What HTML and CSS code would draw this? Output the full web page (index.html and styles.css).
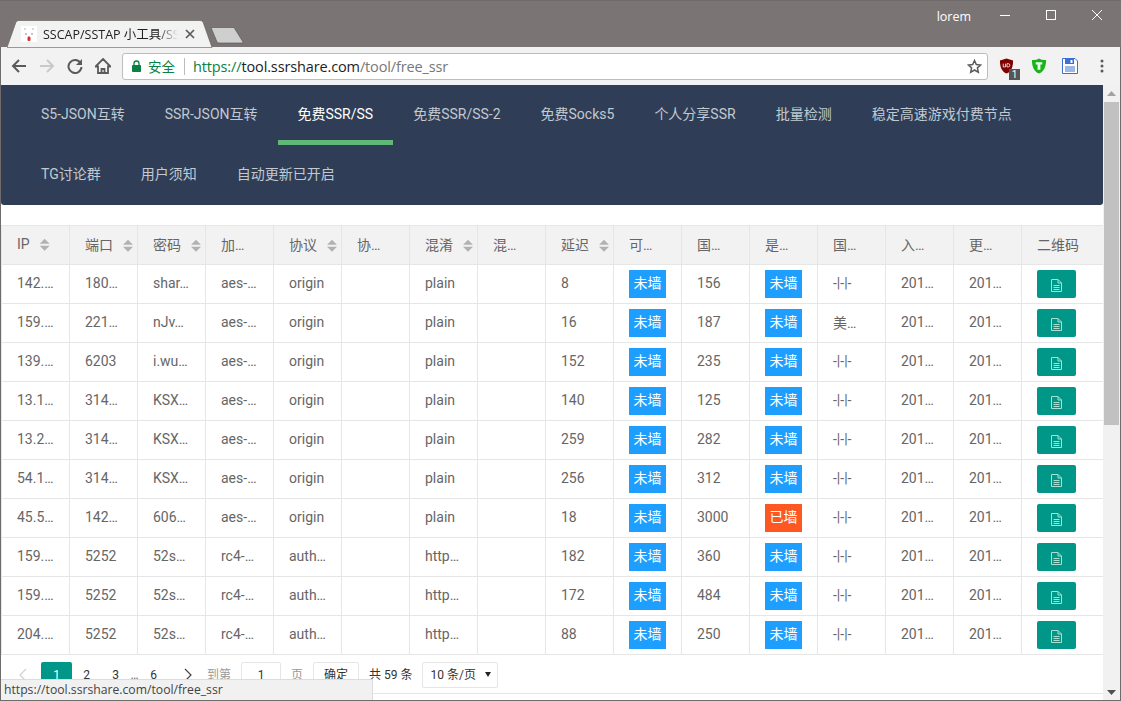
FILE: index.html
```html
<!DOCTYPE html>
<html lang="zh">
<head>
<meta charset="utf-8">
<title>SSCAP/SSTAP 小工具</title>
<link rel="stylesheet" href="styles.css">
</head>
<body>
<div class="window">
  <header class="titlebar">
    <div class="tab">
      <svg class="tab-shape" width="206" height="28" viewBox="0 0 206 28"><path d="M0 27.5 L9 2 Q10 .5 12 .5 H193 Q195 .5 196 2 L205 27.5 Z" fill="#f2f2f2" stroke="#5f5a5a" stroke-width=".6"/></svg>
      <svg class="favicon" width="16" height="16" viewBox="0 0 16 16"><rect width="16" height="16" fill="#fff"/><circle cx="4" cy="3" r="1" fill="#ccc"/><circle cx="12" cy="3" r="1" fill="#ccc"/><circle cx="5" cy="8" r=".9" fill="#aaa"/><circle cx="11" cy="8" r=".9" fill="#aaa"/><rect x="6.5" y="10.500" width="3" height="4.500" rx="1.200" fill="#d8322f"/></svg>
      <span class="tab-title">SSCAP/SSTAP 小工具/SS</span>
      <svg class="tab-close" width="10" height="10" viewBox="0 0 10 10"><path d="M1 1 L9 9 M9 1 L1 9" stroke="#5a5a5a" stroke-width="1.700"/></svg>
    </div>
    <svg class="newtab" width="34" height="17" viewBox="0 0 34 17"><path d="M1 .5 H24 L33 15 Q33 16 32 16 H9 Q7.500 16 7 15 Z" fill="#cfcfcf" stroke="#5f5a5a" stroke-width=".7"/></svg>
    <span class="user">lorem</span>
    <div class="winctl">
      <svg width="46" height="30" viewBox="0 0 46 30"><path d="M18 14.500 H28" stroke="#fff"/></svg>
      <svg width="46" height="30" viewBox="0 0 46 30"><rect x="18.500" y="9.500" width="9" height="9" fill="none" stroke="#fff"/></svg>
      <svg width="46" height="30" viewBox="0 0 46 30"><path d="M18 9 L28 19 M28 9 L18 19" stroke="#fff"/></svg>
    </div>
  </header>

  <div class="toolbar">
    <svg class="tool" width="16" height="16" viewBox="0 0 16 16"><path d="M15 8 H2 M8 2 L2 8 L8 14" fill="none" stroke="#5a5a5a" stroke-width="2"/></svg>
    <svg class="tool" width="16" height="16" viewBox="0 0 16 16"><path d="M1 8 H14 M8 2 L14 8 L8 14" fill="none" stroke="#c9c9c9" stroke-width="2"/></svg>
    <svg class="tool" width="16" height="16" viewBox="0 0 16 16"><path d="M13.500 5 A6.500 6.500 0 1 0 14.500 9" fill="none" stroke="#5a5a5a" stroke-width="2"/><path d="M15 1 V7 H9 Z" fill="#5a5a5a"/></svg>
    <svg class="tool" width="16" height="16" viewBox="0 0 16 16"><path d="M8 1 L15.500 8.500 H13 V15 H3 V8.500 H.5 Z M6.500 15 V11 H9.500 V15" fill="none" stroke="#5a5a5a" stroke-width="1.800"/></svg>
    <div class="omnibox">
      <svg class="lock" width="9" height="12" viewBox="0 0 9 12"><path d="M2 5 V3.500 A2.500 2.500 0 0 1 7 3.500 V5" fill="none" stroke="#0b8043" stroke-width="1.300"/><rect y="5" width="9" height="7" rx=".8" fill="#0b8043"/></svg>
      <span class="secure">安全</span>
      <span class="sep"></span>
      <span class="url"><span class="url-scheme">https://</span>tool.ssrshare.com<span class="url-path">/tool/free_ssr</span></span>
      <svg class="star" width="15" height="15" viewBox="0 0 15 15"><path d="M7.500 1.500 L9.300 5.500 L13.700 6 L10.400 8.900 L11.300 13.300 L7.500 11 L3.700 13.300 L4.600 8.900 L1.300 6 L5.700 5.500 Z" fill="none" stroke="#5a5a5a" stroke-width="1.500"/></svg>
    </div>
    <div class="ext ext-ub">
      <svg width="15" height="16" viewBox="0 0 16 17"><path d="M8 .5 L15 2.500 C15 9 13.500 14 8 16.500 C2.500 14 1 9 1 2.500 Z" fill="#800000"/><path d="M4.500 6 V9.500 H7 V6 M8.500 6 V9.500 H10 Q11.500 9.500 11.500 7.700 T10 6 H8.500" fill="none" stroke="#eee" stroke-width=".9"/></svg>
      <span class="badge">1</span>
    </div>
    <svg class="ext-green" width="16" height="16" viewBox="0 0 16 17"><path d="M8 .5 Q11 2.500 15.500 2 C15.500 9 13.500 14 8 16.500 C2.500 14 .5 9 .5 2 Q5 2.500 8 .5 Z" fill="#1bb31b"/><path d="M4.500 4.500 H11.500 V7 H9.500 V12.500 H6.500 V7 H4.500 Z" fill="#eaffea"/></svg>
    <svg class="ext-save" width="16" height="16" viewBox="0 0 16 16"><path d="M.5 .5 H13 L15.500 3 V15.500 H.5 Z" fill="#fff" stroke="#3b6fd4"/><rect x="3" y="1" width="9" height="5" fill="#3b6fd4"/><rect x="8.500" y="2" width="2" height="3" fill="#fff"/><path d="M3 9 H13 M3 11 H13 M3 13 H13" stroke="#3b6fd4"/></svg>
    <svg class="menu" width="4" height="14" viewBox="0 0 4 14"><circle cx="2" cy="2" r="1.500" fill="#5a5a5a"/><circle cx="2" cy="7" r="1.500" fill="#5a5a5a"/><circle cx="2" cy="12" r="1.500" fill="#5a5a5a"/></svg>
  </div>

  <div class="viewport">
    <main class="page">
      <nav class="nav">
        <a class="nav-item">S5-JSON互转</a>
        <a class="nav-item">SSR-JSON互转</a>
        <a class="nav-item active">免费SSR/SS</a>
        <a class="nav-item">免费SSR/SS-2</a>
        <a class="nav-item">免费Socks5</a>
        <a class="nav-item">个人分享SSR</a>
        <a class="nav-item">批量检测</a>
        <a class="nav-item">稳定高速游戏付费节点</a>
        <a class="nav-item">TG讨论群</a>
        <a class="nav-item">用户须知</a>
        <a class="nav-item">自动更新已开启</a>
      </nav>
      <table class="grid">
        <colgroup>
          <col class="c"><col class="c"><col class="c"><col class="c"><col class="c"><col class="c"><col class="c"><col class="c"><col class="c"><col class="c"><col class="c"><col class="c"><col class="c"><col class="c"><col class="c"><col class="c-last">
        </colgroup>
        <thead>
          <tr>
            <th class="sortable">IP</th><th class="sortable">端口</th><th class="sortable">密码</th><th>加…</th><th class="sortable">协议</th><th>协…</th><th class="sortable">混淆</th><th>混…</th><th class="sortable">延迟</th><th>可…</th><th>国…</th><th>是…</th><th>国…</th><th>入…</th><th>更…</th><th>二维码</th>
          </tr>
        </thead>
        <tbody>
          <tr><td>142.…</td><td>180…</td><td>shar…</td><td>aes-…</td><td>origin</td><td></td><td>plain</td><td></td><td>8</td><td><span class="tag">未墙</span></td><td>156</td><td><span class="tag">未墙</span></td><td>-|-|-</td><td>201…</td><td>201…</td><td><button class="qr"><svg width="11" height="13" viewBox="0 0 11 13"><path d="M.5 .5 H7 L10.500 4 V12.500 H.5 Z M7 .5 V4 H10.500 M2.500 6.500 H8.500 M2.500 8.500 H8.500 M2.500 10.500 H8.500" fill="none" stroke="#a9e0d2"/></svg></button></td></tr>
          <tr><td>159.…</td><td>221…</td><td>nJv…</td><td>aes-…</td><td>origin</td><td></td><td>plain</td><td></td><td>16</td><td><span class="tag">未墙</span></td><td>187</td><td><span class="tag">未墙</span></td><td>美…</td><td>201…</td><td>201…</td><td><button class="qr"><svg width="11" height="13" viewBox="0 0 11 13"><path d="M.5 .5 H7 L10.500 4 V12.500 H.5 Z M7 .5 V4 H10.500 M2.500 6.500 H8.500 M2.500 8.500 H8.500 M2.500 10.500 H8.500" fill="none" stroke="#a9e0d2"/></svg></button></td></tr>
          <tr><td>139.…</td><td>6203</td><td>i.wu…</td><td>aes-…</td><td>origin</td><td></td><td>plain</td><td></td><td>152</td><td><span class="tag">未墙</span></td><td>235</td><td><span class="tag">未墙</span></td><td>-|-|-</td><td>201…</td><td>201…</td><td><button class="qr"><svg width="11" height="13" viewBox="0 0 11 13"><path d="M.5 .5 H7 L10.500 4 V12.500 H.5 Z M7 .5 V4 H10.500 M2.500 6.500 H8.500 M2.500 8.500 H8.500 M2.500 10.500 H8.500" fill="none" stroke="#a9e0d2"/></svg></button></td></tr>
          <tr><td>13.1…</td><td>314…</td><td>KSX…</td><td>aes-…</td><td>origin</td><td></td><td>plain</td><td></td><td>140</td><td><span class="tag">未墙</span></td><td>125</td><td><span class="tag">未墙</span></td><td>-|-|-</td><td>201…</td><td>201…</td><td><button class="qr"><svg width="11" height="13" viewBox="0 0 11 13"><path d="M.5 .5 H7 L10.500 4 V12.500 H.5 Z M7 .5 V4 H10.500 M2.500 6.500 H8.500 M2.500 8.500 H8.500 M2.500 10.500 H8.500" fill="none" stroke="#a9e0d2"/></svg></button></td></tr>
          <tr><td>13.2…</td><td>314…</td><td>KSX…</td><td>aes-…</td><td>origin</td><td></td><td>plain</td><td></td><td>259</td><td><span class="tag">未墙</span></td><td>282</td><td><span class="tag">未墙</span></td><td>-|-|-</td><td>201…</td><td>201…</td><td><button class="qr"><svg width="11" height="13" viewBox="0 0 11 13"><path d="M.5 .5 H7 L10.500 4 V12.500 H.5 Z M7 .5 V4 H10.500 M2.500 6.500 H8.500 M2.500 8.500 H8.500 M2.500 10.500 H8.500" fill="none" stroke="#a9e0d2"/></svg></button></td></tr>
          <tr><td>54.1…</td><td>314…</td><td>KSX…</td><td>aes-…</td><td>origin</td><td></td><td>plain</td><td></td><td>256</td><td><span class="tag">未墙</span></td><td>312</td><td><span class="tag">未墙</span></td><td>-|-|-</td><td>201…</td><td>201…</td><td><button class="qr"><svg width="11" height="13" viewBox="0 0 11 13"><path d="M.5 .5 H7 L10.500 4 V12.500 H.5 Z M7 .5 V4 H10.500 M2.500 6.500 H8.500 M2.500 8.500 H8.500 M2.500 10.500 H8.500" fill="none" stroke="#a9e0d2"/></svg></button></td></tr>
          <tr><td>45.5…</td><td>142…</td><td>606…</td><td>aes-…</td><td>origin</td><td></td><td>plain</td><td></td><td>18</td><td><span class="tag">未墙</span></td><td>3000</td><td><span class="tag tag-blocked">已墙</span></td><td>-|-|-</td><td>201…</td><td>201…</td><td><button class="qr"><svg width="11" height="13" viewBox="0 0 11 13"><path d="M.5 .5 H7 L10.500 4 V12.500 H.5 Z M7 .5 V4 H10.500 M2.500 6.500 H8.500 M2.500 8.500 H8.500 M2.500 10.500 H8.500" fill="none" stroke="#a9e0d2"/></svg></button></td></tr>
          <tr><td>159.…</td><td>5252</td><td>52s…</td><td>rc4-…</td><td>auth…</td><td></td><td>http…</td><td></td><td>182</td><td><span class="tag">未墙</span></td><td>360</td><td><span class="tag">未墙</span></td><td>-|-|-</td><td>201…</td><td>201…</td><td><button class="qr"><svg width="11" height="13" viewBox="0 0 11 13"><path d="M.5 .5 H7 L10.500 4 V12.500 H.5 Z M7 .5 V4 H10.500 M2.500 6.500 H8.500 M2.500 8.500 H8.500 M2.500 10.500 H8.500" fill="none" stroke="#a9e0d2"/></svg></button></td></tr>
          <tr><td>159.…</td><td>5252</td><td>52s…</td><td>rc4-…</td><td>auth…</td><td></td><td>http…</td><td></td><td>172</td><td><span class="tag">未墙</span></td><td>484</td><td><span class="tag">未墙</span></td><td>-|-|-</td><td>201…</td><td>201…</td><td><button class="qr"><svg width="11" height="13" viewBox="0 0 11 13"><path d="M.5 .5 H7 L10.500 4 V12.500 H.5 Z M7 .5 V4 H10.500 M2.500 6.500 H8.500 M2.500 8.500 H8.500 M2.500 10.500 H8.500" fill="none" stroke="#a9e0d2"/></svg></button></td></tr>
          <tr><td>204.…</td><td>5252</td><td>52s…</td><td>rc4-…</td><td>auth…</td><td></td><td>http…</td><td></td><td>88</td><td><span class="tag">未墙</span></td><td>250</td><td><span class="tag">未墙</span></td><td>-|-|-</td><td>201…</td><td>201…</td><td><button class="qr"><svg width="11" height="13" viewBox="0 0 11 13"><path d="M.5 .5 H7 L10.500 4 V12.500 H.5 Z M7 .5 V4 H10.500 M2.500 6.500 H8.500 M2.500 8.500 H8.500 M2.500 10.500 H8.500" fill="none" stroke="#a9e0d2"/></svg></button></td></tr>
        </tbody>
      </table>
      <div class="pager">
        <svg class="pg-arrow" width="8" height="14" viewBox="0 0 8 14"><path d="M7 1 L1 7 L7 13" fill="none" stroke="#d2d2d2" stroke-width="1.200"/></svg>
        <span class="pg-num current">1</span>
        <span class="pg-num">2</span>
        <span class="pg-num">3</span>
        <span class="pg-dots">…</span>
        <span class="pg-num">6</span>
        <svg class="pg-arrow pg-next" width="8" height="14" viewBox="0 0 8 14"><path d="M1 1 L7 7 L1 13" fill="none" stroke="#444" stroke-width="1.200"/></svg>
        <span class="pg-muted pg-goto">到第</span>
        <span class="pg-input">1</span>
        <span class="pg-muted">页</span>
        <span class="pg-ok">确定</span>
        <span class="pg-total">共 59 条</span>
        <span class="pg-size">10 条/页<i class="caret"></i></span>
      </div>
    </main>
    <div class="scrollbar">
      <svg width="9" height="5" viewBox="0 0 9 5"><path d="M4.500 0 L9 5 H0 Z" fill="#a3a3a3"/></svg>
      <div class="thumb"></div>
      <svg class="sb-down" width="9" height="5" viewBox="0 0 9 5"><path d="M0 0 H9 L4.500 5 Z" fill="#505050"/></svg>
    </div>
    <div class="status">https://tool.ssrshare.com/tool/free_ssr</div>
  </div>
</div>
</body>
</html>
```
FILE: styles.css
```css
* { box-sizing: border-box; }
html, body { margin: 0; height: 100%; overflow: hidden; }
body { font-family: Roboto, "Noto Sans CJK SC", sans-serif; }

.window {
  width: 1121px; height: 701px;
  display: flex; flex-direction: column;
  border: 1px solid #6f6b6b; border-top: 0;
  background: #fff;
}

.titlebar {
  height: 47px; flex: none;
  display: flex; align-items: flex-start;
  background: #7b7474;
  border-top: 1px solid #6f6b6b;
  margin: 0 -1px;
  padding: 0 1px 0 7px;
  position: relative;
}
.tab {
  position: relative; width: 206px; height: 27px; margin-top: 19px; flex: none;
  display: flex; align-items: center;
}
.tab-shape { position: absolute; left: 0; top: 0; }
.favicon { position: relative; margin-left: 14px; flex: none; }
.tab-title {
  position: relative; margin-left: 6px; width: 135px; overflow: hidden; white-space: nowrap;
  font: 12.5px "Open Sans", "Noto Sans CJK SC", sans-serif; color: #222;
  -webkit-mask-image: linear-gradient(to right, #000 85%, transparent 100%);
  mask-image: linear-gradient(to right, #000 85%, transparent 100%);
}
.tab-close { position: relative; margin-left: 7px; flex: none; }
.newtab { margin: 26px 0 0 -3px; flex: none; }
.user {
  margin-left: auto; margin-top: 7px; margin-right: 11px;
  font: 12.5px "Open Sans", sans-serif; color: #fff;
}
.winctl { display: flex; }
.winctl svg { display: block; }

.toolbar {
  height: 38px; flex: none;
  display: flex; align-items: center;
  background: #f2f2f2;
  padding-left: 10px;
}
.tool { flex: none; margin-right: 12px; }
.omnibox {
  width: 866px; height: 27px; margin-left: -1px; flex: none;
  display: flex; align-items: center;
  background: #fff; border: 1px solid #bdbdbd; border-radius: 3px;
  padding: 0 5px 0 9px;
}
.lock { flex: none; }
.secure { margin-left: 7px; font: 13.5px "Noto Sans CJK SC", sans-serif; color: #0b8043; }
.sep { width: 1px; height: 17px; background: #bdbdbd; margin: 0 8px 0 9px; }
.url { font: 14.5px "Open Sans", sans-serif; color: #222; white-space: nowrap; letter-spacing: -.13px; }
.url-scheme { color: #0b8043; }
.url-path { color: #777; }
.star { margin-left: auto; }
.ext { position: relative; margin-left: 11px; height: 16px; }
.ext svg { display: block; }
.badge {
  position: absolute; left: 10px; top: 11px; width: 11px; height: 11px;
  background: #555; color: #fff; font: 10px/11px Roboto, sans-serif; text-align: center;
}
.ext-green { margin-left: 17px; }
.ext-save { margin-left: 15px; }
.menu { margin-left: 22px; }

.viewport { flex: 1; min-height: 0; position: relative; display: flex; overflow: hidden; }
.page { flex: 1; min-width: 0; overflow: hidden; }

.nav {
  display: flex; flex-wrap: wrap; align-content: flex-start;
  height: 120px; padding-left: 20px; background: #2f3e56;
  border-radius: 0 0 3px 3px;
}
.nav-item {
  position: relative; height: 60px; padding: 0 20px; flex: none;
  font-size: 14px; line-height: 59px; color: #c2c9d0; white-space: nowrap;
}
.nav-item.active { color: #fff; }
.nav-item.active::after {
  content: ""; position: absolute; left: 0; right: 0; top: 55px; height: 5px; background: #5fb878;
}
.nav-item:nth-child(8) { margin-right: 60px; }

.grid {
  width: 1102px; margin-top: 20px; table-layout: fixed; border-collapse: collapse;
  font-size: 14px; color: #666;
}
.c { width: 68px; }
.c-last { width: 82px; }
.grid th, .grid td {
  border: 1px solid #e6e6e6; padding: 0 0 2px 15px; text-align: left;
  white-space: nowrap; overflow: hidden;
}
.grid th { height: 39px; background: #f2f2f2; font-weight: 400; }
.grid td { height: 39px; }
.sortable::after {
  content: ""; display: inline-block; vertical-align: middle;
  width: 10px; height: 12px; margin-left: 10px; margin-top: -1px;
  background: #b2b2b2;
  clip-path: polygon(50% 0, 100% 42%, 50% 42%, 50% 58%, 100% 58%, 50% 100%, 0 58%, 50% 58%, 50% 42%, 0 42%);
}
.tag {
  display: block; width: 37px; height: 28px; margin: 1px 0 -1px; line-height: 26px; text-align: center;
  background: #1e9fff; color: #fff;
}
.tag-blocked { background: #ff5722; }
.qr {
  display: flex; align-items: center; justify-content: center;
  width: 39px; height: 28px; margin: 1px 0 -1px; padding: 3px 0 0; border: 0; border-radius: 2px; background: #009688;
}
.qr svg { display: block; }

.pager {
  display: flex; align-items: flex-start; height: 39px; width: 1103px;
  border-bottom: 1px solid #e6e6e6;
  padding: 7px 0 0 18px;
  font-size: 12px; line-height: 26px; color: #333;
}
.pg-arrow { flex: none; margin-top: 6px; }
.pg-num { width: 29px; height: 30px; text-align: center; flex: none; }
.pg-num.current { width: 31px; margin-left: 14px; background: #009688; color: #fff; border-radius: 2px; }
.pg-dots { width: 9px; text-align: center; color: #666; flex: none; }
.pg-next { margin-left: 16px; }
.pg-muted { color: #999; }
.pg-goto { margin-left: 15px; }
.pg-input {
  width: 40px; height: 30px; margin: 0 10px; border: 1px solid #e6e6e6; border-radius: 2px;
  line-height: 24px; text-align: center; background: #fff;
}
.pg-ok {
  width: 46px; height: 30px; margin-left: 10px; border: 1px solid #e6e6e6; border-radius: 2px;
  line-height: 24px; text-align: center; background: #fff;
}
.pg-total { margin-left: 10px; }
.pg-size {
  position: relative; width: 76px; height: 26px; margin-left: 10px; padding-left: 7px;
  border: 1px solid #e6e6e6; border-radius: 2px; line-height: 24px;
}
.caret {
  position: absolute; right: 6px; top: 9px; width: 0; height: 0;
  border: 3px solid transparent; border-top: 5px solid #222; border-bottom: 0;
}

.scrollbar {
  width: 17px; flex: none; background: #f1f1f1;
  display: flex; flex-direction: column; align-items: center; padding-top: 6px;
}
.thumb { width: 15px; height: 323px; margin-top: 6px; background: #c1c1c1; }
.sb-down { margin-top: auto; margin-bottom: 5px; }

.status {
  position: absolute; left: 0; bottom: 0; width: 372px; height: 21px;
  padding-left: 3px; background: #f1f1f1; border-top: 1px solid #dcdcdc; border-right: 1px solid #dcdcdc;
  font: 12.2px/20px "Open Sans", sans-serif; color: #444;
}
```
